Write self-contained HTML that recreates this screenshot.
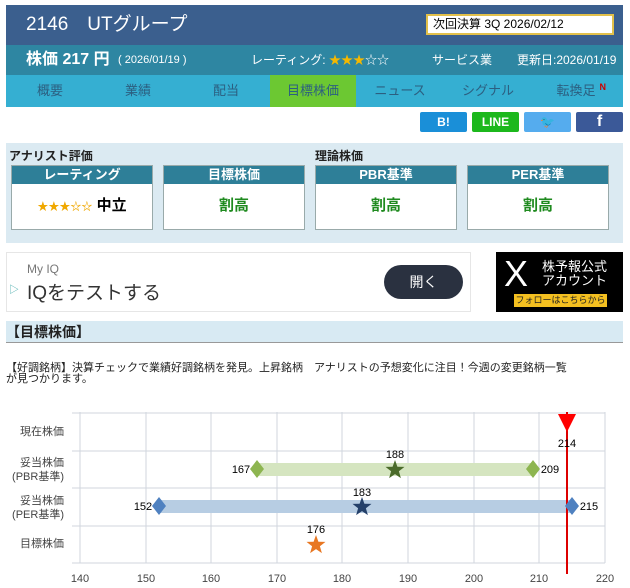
<!DOCTYPE html>
<html><head><meta charset="utf-8"><style>
*{margin:0;padding:0;box-sizing:border-box}
body{width:630px;height:588px;background:#fff;font-family:"Liberation Sans","Noto Sans CJK JP",sans-serif;position:relative;overflow:hidden;color:#222}
.a{position:absolute}
.hdr{left:6px;top:5px;width:617px;height:40px;background:#3b5f8e;color:#fff;font-size:19px;line-height:40px;padding-left:20px}
.next{left:426px;top:14px;width:188px;height:21px;background:#fff;border:2px solid #e2c04a;font-size:12px;line-height:17px;padding-left:5px;color:#000}
.r2{left:6px;top:45px;width:617px;height:30px;background:#2e86a2;color:#fff;font-size:12px;line-height:30px}
.nav{left:6px;top:75px;width:617px;height:32px;background:#35afd2;display:flex}
.nav div{width:88px;text-align:center;line-height:32px;font-size:13px;color:#2c5f80;position:relative}
.sb{top:112px;height:20px;width:47px;border-radius:2px;color:#fff;font-weight:bold;font-size:12px;text-align:center;line-height:20px}
.pan{left:6px;top:143px;width:617px;height:100px;background:#dbeaf2}
.box{top:165px;width:142px;height:65px;background:#fff;border:1px solid #9aa}
.box .h{background:#2e7f98;color:#fff;font-weight:bold;font-size:13px;text-align:center;height:18px;line-height:18px}
.box .v{text-align:center;font-size:15px;font-weight:bold;color:#1e8a1e;line-height:44px}
</style></head><body>
<div class="a hdr">2146　UTグループ</div>
<div class="a next">次回決算 3Q 2026/02/12</div>
<div class="a r2"><span class="a" style="left:20px;font-size:16px;font-weight:bold">株価 217 円</span><span class="a" style="left:112px;font-size:11px">( 2026/01/19 )</span><span class="a" style="left:245px">レーティング: <span style="color:#f5b800">★★★</span>☆☆</span><span class="a" style="left:426px">サービス業</span><span class="a" style="left:511px">更新日:2026/01/19</span></div>
<div class="a nav"><div>概要</div><div>業績</div><div>配当</div><div style="background:#6cc832;width:86px">目標株価</div><div>ニュース</div><div>シグナル</div><div>転換足<span style="position:absolute;right:14px;top:7px;line-height:10px;color:#c00;font-size:9px;font-weight:bold">N</span></div></div>
<div class="a sb" style="left:420px;background:#1a8fd8">B!</div>
<div class="a sb" style="left:472px;background:#1cb81c">LINE</div>
<div class="a sb" style="left:524px;background:#55acee">🐦</div>
<div class="a sb" style="left:576px;background:#3b5998;font-size:16px">f</div>
<div class="a pan"></div>
<div class="a" style="left:9px;top:147px;font-size:12px;font-weight:bold">アナリスト評価</div>
<div class="a" style="left:315px;top:147px;font-size:12px;font-weight:bold">理論株価</div>
<div class="a box" style="left:11px"><div class="h">レーティング</div><div class="v" style="color:#000"><span style="color:#f0a800;font-size:11px">★★★☆☆</span> 中立</div></div>
<div class="a box" style="left:163px"><div class="h">目標株価</div><div class="v">割高</div></div>
<div class="a box" style="left:315px"><div class="h">PBR基準</div><div class="v">割高</div></div>
<div class="a box" style="left:467px"><div class="h">PER基準</div><div class="v">割高</div></div>
<div class="a" style="left:6px;top:252px;width:465px;height:60px;border:1px solid #e6e6e6"></div>
<div class="a" style="left:27px;top:262px;font-size:12px;color:#777">My IQ</div>
<div class="a" style="left:27px;top:278px;font-size:19px;color:#333">IQをテストする</div>
<div class="a" style="left:9px;top:281px;font-size:10px;color:#4aa">▷</div>
<div class="a" style="left:384px;top:265px;width:79px;height:34px;border-radius:17px;background:#2a3140;color:#fff;font-size:14px;text-align:center;line-height:34px">開く</div>
<div class="a" style="left:496px;top:252px;width:127px;height:60px;background:#000;color:#fff;white-space:nowrap">
<div class="a" style="left:8px;top:2px;font-size:36px;line-height:40px">X</div>
<div class="a" style="left:46px;top:8px;font-size:13px;line-height:14px;text-align:center">株予報公式<br>アカウント</div>
<div class="a" style="left:18px;top:42px;width:93px;height:13px;background:#f4c020;color:#222;font-size:9px;line-height:13px;text-align:center;overflow:hidden">フォローはこちらから</div></div>
<div class="a" style="left:6px;top:321px;width:617px;height:22px;background:#d8eaf3;border-bottom:1px solid #999;font-size:14px;font-weight:bold;line-height:22px">【目標株価】</div>
<div class="a" style="left:6px;top:363px;font-size:11px;line-height:11px;width:580px">【好調銘柄】決算チェックで業績好調銘柄を発見。上昇銘柄　アナリストの予想変化に注目！今週の変更銘柄一覧<br>が見つかります。</div>
<svg class="a" style="left:0;top:400px" width="630" height="188" font-family="Liberation Sans,Noto Sans CJK JP,sans-serif">
<g stroke="#d0d6de" stroke-width="1">
<line x1="80" y1="12" x2="80" y2="163"/><line x1="146" y1="12" x2="146" y2="163"/><line x1="211" y1="12" x2="211" y2="163"/><line x1="277" y1="12" x2="277" y2="163"/><line x1="342" y1="12" x2="342" y2="163"/><line x1="408" y1="12" x2="408" y2="163"/><line x1="474" y1="12" x2="474" y2="163"/><line x1="539" y1="12" x2="539" y2="163"/><line x1="605" y1="12" x2="605" y2="163"/>
<line x1="72" y1="13" x2="605" y2="13"/><line x1="72" y1="51" x2="605" y2="51"/><line x1="72" y1="88" x2="605" y2="88"/><line x1="72" y1="126" x2="605" y2="126"/><line x1="72" y1="163" x2="605" y2="163"/></g>
<g font-size="11" fill="#444" text-anchor="end"><text x="64" y="35">現在株価</text><text x="64" y="66">妥当株価</text><text x="64" y="80">(PBR基準)</text><text x="64" y="104">妥当株価</text><text x="64" y="118">(PER基準)</text><text x="64" y="147">目標株価</text></g>
<g font-size="11" fill="#444" text-anchor="middle"><text x="80" y="182">140</text><text x="146" y="182">150</text><text x="211" y="182">160</text><text x="277" y="182">170</text><text x="342" y="182">180</text><text x="408" y="182">190</text><text x="474" y="182">200</text><text x="539" y="182">210</text><text x="605" y="182">220</text></g>
<rect x="257" y="63" width="276" height="13" fill="#d5e5c0"/>
<rect x="159" y="100" width="413" height="13" fill="#b7cde3"/>
<line x1="567" y1="12" x2="567" y2="174" stroke="#d00" stroke-width="2"/>
<polygon points="558,14 576,14 567,32" fill="#f00"/>
<g fill="#8db550"><polygon points="257,60 264,69 257,78 250,69"/><polygon points="533,60 540,69 533,78 526,69"/></g>
<g fill="#4f81c0"><polygon points="159,97 166,106 159,115 152,106"/><polygon points="572,97 579,106 572,115 565,106"/></g>
<g transform="translate(395,70)"><polygon fill="#4b6b2a" points="0,-10 2.4,-3.3 9.5,-3.1 3.9,1.3 5.9,8.1 0,4.1 -5.9,8.1 -3.9,1.3 -9.5,-3.1 -2.4,-3.3"/></g>
<g transform="translate(362,107)"><polygon fill="#24406a" points="0,-10 2.4,-3.3 9.5,-3.1 3.9,1.3 5.9,8.1 0,4.1 -5.9,8.1 -3.9,1.3 -9.5,-3.1 -2.4,-3.3"/></g>
<g transform="translate(316,145)"><polygon fill="#e87722" points="0,-10 2.4,-3.3 9.5,-3.1 3.9,1.3 5.9,8.1 0,4.1 -5.9,8.1 -3.9,1.3 -9.5,-3.1 -2.4,-3.3"/></g>
<g font-size="11" fill="#000" text-anchor="middle"><text x="567" y="47">214</text><text x="395" y="58">188</text><text x="362" y="96">183</text><text x="316" y="133">176</text>
<text x="241" y="73">167</text><text x="550" y="73">209</text><text x="143" y="110">152</text><text x="589" y="110">215</text></g>
</svg>
</body></html>
